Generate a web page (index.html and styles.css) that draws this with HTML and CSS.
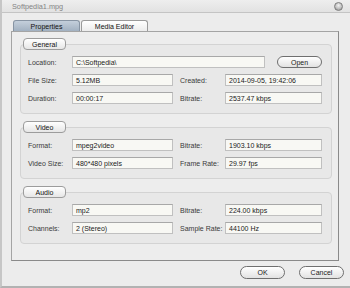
FILE: index.html
```html
<!DOCTYPE html>
<html>
<head>
<meta charset="utf-8">
<link rel="stylesheet" href="styles.css">
</head>
<body>
<div class="window">
  <div class="titlebar">
    <span class="title">Softpedia1.mpg</span>
    <span class="close"></span>
  </div>
  <div class="main">
    <div class="tabs">
      <div class="tab active">Properties</div>
      <div class="tab">Media Editor</div>
    </div>
    <div class="panel">
      <div class="group">
        <div class="group-label">General</div>
        <div class="loc-row">
          <span class="lbl">Location:</span>
          <div class="field wide">C:\Softpedia\</div>
          <div class="btn open">Open</div>
        </div>
        <div class="grid">
          <span class="lbl">File Size:</span>
          <div class="field">5.12MB</div>
          <span class="lbl lbl2">Created:</span>
          <div class="field">2014-09-05, 19:42:06</div>
          <span class="lbl">Duration:</span>
          <div class="field">00:00:17</div>
          <span class="lbl lbl2">Bitrate:</span>
          <div class="field">2537.47 kbps</div>
        </div>
      </div>
      <div class="group">
        <div class="group-label">Video</div>
        <div class="grid">
          <span class="lbl">Format:</span>
          <div class="field">mpeg2video</div>
          <span class="lbl lbl2">Bitrate:</span>
          <div class="field">1903.10 kbps</div>
          <span class="lbl">Video Size:</span>
          <div class="field">480*480 pixels</div>
          <span class="lbl lbl2">Frame Rate:</span>
          <div class="field">29.97 fps</div>
        </div>
      </div>
      <div class="group">
        <div class="group-label">Audio</div>
        <div class="grid">
          <span class="lbl">Format:</span>
          <div class="field">mp2</div>
          <span class="lbl lbl2">Bitrate:</span>
          <div class="field">224.00 kbps</div>
          <span class="lbl">Channels:</span>
          <div class="field">2 (Stereo)</div>
          <span class="lbl lbl2">Sample Rate:</span>
          <div class="field">44100 Hz</div>
        </div>
      </div>
    </div>
    <div class="footer">
      <div class="btn">OK</div>
      <div class="btn">Cancel</div>
    </div>
  </div>
</div>
</body>
</html>
```
FILE: styles.css
```css
* { box-sizing: border-box; }
html, body { margin: 0; padding: 0; }
body {
  width: 350px;
  height: 288px;
  overflow: hidden;
  background: #dcdcdc;
  font-family: "Liberation Sans", Arial, sans-serif;
  font-size: 7px;
  color: #222;
}
.window {
  width: 350px;
  height: 288px;
  background: #ececec;
  border-left: 2px solid #c6c6c6;
  border-bottom: 2px solid #b2b2b2;
  display: flex;
  flex-direction: column;
}
.titlebar {
  height: 13px;
  flex: none;
  display: flex;
  align-items: center;
  justify-content: space-between;
  padding: 0 7px 0 10px;
  background: linear-gradient(#eeeeee, #e2e2e2);
  border-bottom: 1px solid #c4c4c4;
}
.title {
  font-size: 7.3px;
  color: #858585;
  margin-top: 1px;
}
.close {
  width: 9px;
  height: 9px;
  border-radius: 50%;
  background: radial-gradient(circle at 50% 35%, #f2f2f2 0, #c9c9c9 45%, #8d8d8d 100%);
  border: 1px solid #7d7d7d;
}
.main {
  padding: 7px 0 0 9px;
  display: flex;
  flex-direction: column;
}
.tabs {
  display: flex;
  margin-left: 2px;
  height: 11px;
}
.tab {
  width: 67px;
  height: 11px;
  border: 1px solid #9a9a9a;
  border-bottom: none;
  border-radius: 3px 3px 0 0;
  background: linear-gradient(#ffffff, #ececec);
  display: flex;
  align-items: center;
  justify-content: center;
  color: #111;
  margin-right: 1px;
}
.tab.active {
  background: linear-gradient(#c4cfdb, #a2b1c1);
  border-color: #8794a3;
}
.panel {
  width: 328px;
  height: 230px;
  border: 1px solid #a4a4a4;
  border-right-color: #8a8a8a;
  border-bottom-color: #8a8a8a;
  background: #ededed;
  padding: 12px 6px 0 8px;
  display: flex;
  flex-direction: column;
  gap: 13px;
}
.group {
  position: relative;
  border: 1px solid #d3d3d3;
  border-radius: 4px;
  background: #e8e8e8;
  padding: 11px 8px 9px 7px;
  display: flex;
  flex-direction: column;
  gap: 6px;
}
.group-label {
  position: absolute;
  top: -7px;
  left: 2px;
  width: 43px;
  height: 12px;
  border: 1px solid #9c9c9c;
  border-radius: 4px;
  background: linear-gradient(#ffffff, #e6e6e6);
  display: flex;
  align-items: center;
  justify-content: center;
  color: #111;
}
.loc-row {
  display: flex;
  align-items: center;
}
.grid {
  display: grid;
  grid-template-columns: 44px 101px 52px 97px;
  row-gap: 6px;
  align-items: center;
}
.lbl {
  color: #3a3a3a;
  white-space: nowrap;
}
.loc-row .lbl { width: 44px; flex: none; }
.lbl2 { padding-left: 7px; }
.field {
  height: 12px;
  border: 1px solid #c0c0c0;
  border-top-color: #a8a8a8;
  background: #f8f8f4;
  padding-left: 3px;
  display: flex;
  align-items: center;
  color: #1a1a1a;
  white-space: nowrap;
  overflow: hidden;
}
.field.wide {
  width: 193px;
  flex: none;
}
.btn {
  width: 45px;
  height: 13px;
  border: 1px solid #6f6f6f;
  border-radius: 7px;
  background: linear-gradient(#ffffff, #e2e2e2);
  display: flex;
  align-items: center;
  justify-content: center;
  color: #1a1a1a;
}
.btn.open {
  margin-left: 12px;
  height: 12px;
}
.footer {
  display: flex;
  justify-content: flex-end;
  gap: 14px;
  padding-right: 6px;
  margin-top: 5px;
}
```
